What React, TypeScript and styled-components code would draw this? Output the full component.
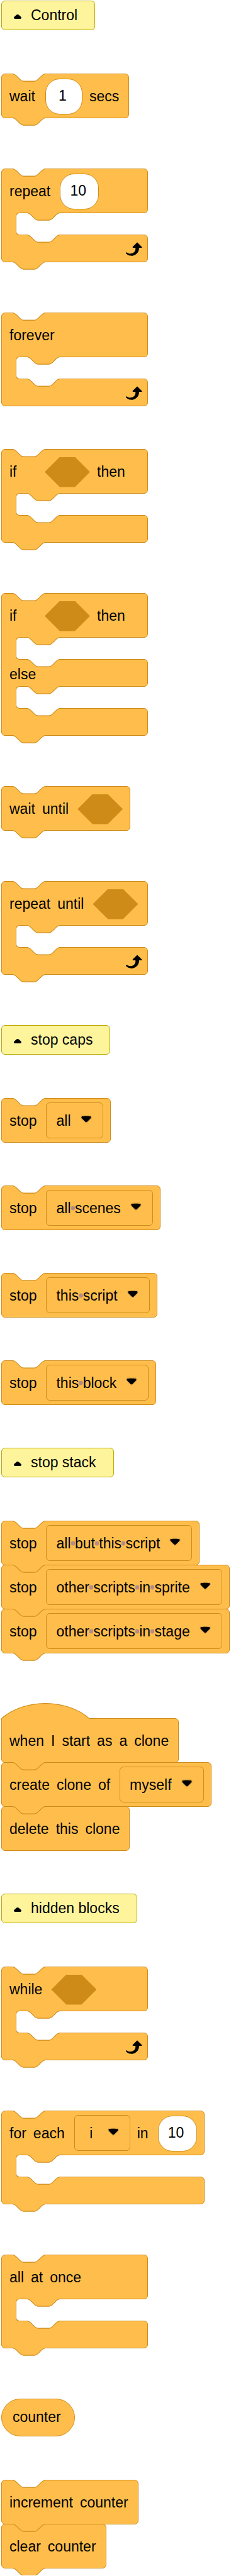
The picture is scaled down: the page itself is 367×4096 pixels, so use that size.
import React, { Fragment, useId, useState } from "react";
import styled, { createGlobalStyle } from "styled-components";

const color = {
  page: "#ffffff",
  block: "#ffbe4c",
  blockEdge: "#cf8b17",
  note: "#fef49c",
  noteEdge: "#bca903",
  spaceDot: "#b58c8a",
  text: "#000000",
};

const GlobalStyle = createGlobalStyle`
  body {
    margin: 0;
    background: ${color.page};
    color: ${color.text};
    font: 23px/26px "Liberation Sans", Arial, sans-serif;
  }
  *, *::before, *::after { box-sizing: border-box; }
`;

const Scripts = styled.main`
  display: flex;
  flex-direction: column;
  align-items: flex-start;
  gap: 69px;
  padding: 1px 0 0 2px;
`;

/* ---------- section notes ---------- */

const Note = styled.header`
  display: flex;
  align-items: center;
  gap: 15px;
  height: 47px;
  padding: 0 27px 2px 19px;
  background: ${color.note};
  border: 1px solid ${color.noteEdge};
  border-radius: 6px;
  white-space: nowrap;
`;

const NoteTitle = styled.h2`
  margin: 0;
  font: inherit;
`;

const NoteToggle = styled.button`
  display: flex;
  padding: 5px 0 0;
  border: 0;
  background: none;
  cursor: pointer;
`;

function Section({ title }: { title: string }) {
  return (
    <Note>
      <NoteToggle type="button" aria-label={`Collapse ${title}`}>
        <svg width="12" height="7" viewBox="0 0 12 7" aria-hidden="true">
          <path d="M6 0C6.8 0 7.4.3 8 .8L11.3 3.8C12.4 4.9 12.1 6.3 11 6.7C9.8 7.1 2.2 7.1 1 6.7C-.1 6.3-.4 4.9.7 3.8L4 .8C4.6.3 5.2 0 6 0Z" />
        </svg>
      </NoteToggle>
      <NoteTitle>{title}</NoteTitle>
    </Note>
  );
}

/* ---------- block shapes ---------- */

const Script = styled.section<{ $open?: boolean }>`
  display: flex;
  flex-direction: column;
  align-items: flex-start;
  padding-bottom: ${(p) => (p.$open ? 12 : 0)}px;
`;

const CBody = styled.div`
  display: flex;
  flex-direction: column;
  min-width: 233px;
`;

const Row = styled.div<{ $corners?: string }>`
  position: relative;
  display: flex;
  align-items: center;
  gap: 11px;
  height: 71px;
  margin-bottom: -1px;
  padding: 0 11px 0 12px;
  background: ${color.block};
  border: 1px solid ${color.blockEdge};
  border-radius: ${(p) => p.$corners ?? "6px"};
  white-space: nowrap;
`;

const MiddleRow = styled(Row)`
  height: 44px;
  padding-top: 4px;
`;

const Foot = styled(Row)`
  height: 44px;
  justify-content: flex-end;
  padding: 0 6px;
`;

const Spine = styled.div`
  position: relative;
  z-index: 1;
  display: flex;
  width: 36px;
  height: 36px;
  margin-bottom: -1px;
  padding-left: 22px;
  background: ${color.block};
  border-left: 1px solid ${color.blockEdge};
`;

const Mouth = styled.div`
  flex: 1;
  background: ${color.page};
  border: 1px solid ${color.blockEdge};
  border-right: 0;
  border-radius: 6px 0 0 6px;
`;

const Connector = styled.svg<{ $edge: "top" | "bottom"; $inner?: boolean }>`
  position: absolute;
  z-index: 2;
  top: ${(p) => (p.$edge === "top" ? "-1px" : "100%")};
  left: ${(p) => (p.$inner ? 40 : 17)}px;
`;

const NOTCH =
  "c2.9 0 4.35 1.45 5.8 2.9l5.8 5.8c1.45 1.45 2.9 2.9 5.8 2.9h17.4c2.9 0 4.35-1.45 5.8-2.9l5.8-5.8c1.45-1.45 2.9-2.9 5.8-2.9";

function Connection({ edge, inner }: { edge: "top" | "bottom"; inner?: boolean }) {
  return (
    <Connector $edge={edge} $inner={inner} width="53" height="13" viewBox="0 0 53 13" aria-hidden="true">
      <path d={`M0 .5${NOTCH}L50 0H2Z`} fill={edge === "top" ? color.page : color.block} />
      <path d={`M0 .5${NOTCH}`} fill="none" stroke={color.blockEdge} strokeWidth="1.1" />
    </Connector>
  );
}

const Notch = ({ inner }: { inner?: boolean }) => <Connection edge="top" inner={inner} />;
const Tab = ({ inner }: { inner?: boolean }) => <Connection edge="bottom" inner={inner} />;

const HatShape = styled.svg`
  position: relative;
  z-index: 1;
  display: block;
  margin: -1px 0;
`;

function Hat() {
  const dome = "M.5 24.5c36.2-31.9 103-31.9 139.2 0";
  return (
    <HatShape width="141" height="25" viewBox="0 0 141 25" aria-hidden="true">
      <path d={`${dome}V25H1Z`} fill={color.block} />
      <path d={dome} fill="none" stroke={color.blockEdge} strokeWidth="1.1" />
    </HatShape>
  );
}

function LoopArrow() {
  return (
    <svg width="35" height="35" viewBox="0 0 24 24" aria-hidden="true">
      <path d="M21.8 11h-2.6c0 1.5-.3 2.9-1 4.2-.8 1.6-2.1 2.8-3.7 3.6-1.5.8-3.3 1.1-4.9.8-1.6-.2-3.2-1-4.4-2.1-.4-.3-.4-.9-.1-1.2.3-.4.9-.4 1.2-.1 1 .7 2.2 1.1 3.4 1.1s2.3-.3 3.3-1c.9-.6 1.6-1.5 2-2.6.3-.9.4-1.8.2-2.8h-2.4c-.4 0-.7-.3-.7-.7 0-.2.1-.3.2-.4l4.4-4.4c.3-.3.7-.3.9 0L22 9.8c.3.3.4.6.3.9s-.3.3-.5.3z" />
    </svg>
  );
}

const CounterPill = styled.div`
  display: flex;
  align-items: center;
  height: 60px;
  padding: 0 21px 2px 17px;
  background: ${color.block};
  border: 1px solid ${color.blockEdge};
  border-radius: 30px;
`;

/* ---------- block contents ---------- */

/* A short first word still leaves the slot after it clear of the notch. */
const Word = styled.span<{ $lead?: boolean }>`
  min-width: ${(p) => (p.$lead ? 42 : 0)}px;
  &:last-of-type:not(:has(~ label, ~ input, ~ i)) {
    margin-right: 4px;
  }
`;

function Words({ text, lead }: { text: string; lead?: boolean }) {
  return (
    <>
      {text.split(" ").map((word, i) => (
        <Word key={i} $lead={lead}>
          {word}
        </Word>
      ))}
    </>
  );
}

const NumberInput = styled.input<{ $wide?: boolean }>`
  width: ${(p) => (p.$wide ? 62 : 59)}px;
  height: 57px;
  margin: 2px 0 0 4px;
  padding: 0 4px 2px 0;
  background: ${color.page};
  border: 1px solid ${color.blockEdge};
  border-radius: 23px;
  color: inherit;
  font: inherit;
  text-align: center;
`;

function NumberSlot({ value, label }: { value: string; label: string }) {
  return <NumberInput type="text" inputMode="numeric" aria-label={label} defaultValue={value} $wide={value.length > 1} />;
}

const BooleanSlot = styled.i`
  width: 72px;
  height: 48px;
  margin: 2px 0 0 3px;
  background: ${color.blockEdge};
  clip-path: polygon(24px 0, calc(100% - 24px) 0, 100% 50%, calc(100% - 24px) 100%, 24px 100%, 0 50%);
`;

const MenuBox = styled.label`
  position: relative;
  display: flex;
  align-items: center;
  gap: 15px;
  height: 57px;
  margin-left: 4px;
  padding: 0 17px 0 15px;
  border: 1px solid ${color.blockEdge};
  border-radius: 6px;
`;

const MenuValue = styled.span`
  min-width: 22px;
  text-align: center;
  white-space: pre;
`;

const SpaceDot = styled.span`
  background: radial-gradient(circle at 50% 13px, ${color.spaceDot} 3px, transparent 4px);
`;

const MenuArrow = styled.svg`
  margin-bottom: 4px;
`;

const MenuSelect = styled.select`
  position: absolute;
  inset: 0;
  width: 100%;
  height: 100%;
  opacity: 0;
  cursor: pointer;
  font: inherit;
`;

function Menu({ initial, options, label }: { initial: string; options: string[]; label: string }) {
  const [value, setValue] = useState(initial);
  const id = useId();
  return (
    <MenuBox htmlFor={id}>
      <MenuValue>
        {value.split(" ").map((word, i) => (
          <Fragment key={i}>
            {i > 0 && <SpaceDot> </SpaceDot>}
            {word}
          </Fragment>
        ))}
      </MenuValue>
      <MenuArrow width="18" height="13" viewBox="0 0 12.71 8.79" aria-hidden="true">
        <path
          opacity=".1"
          d="M12.71 2.44A2.41 2.41 0 0 1 12 4.16L8.08 8.08a2.45 2.45 0 0 1-3.45 0L.72 4.16A2.42 2.42 0 0 1 0 2.44 2.48 2.48 0 0 1 .71.71C1 .47 1.43 0 6.36 0S11.75.46 12 .71a2.44 2.44 0 0 1 .71 1.73Z"
        />
        <path d="M6.36 7.79a1.43 1.43 0 0 1-1-.42L1.42 3.45a1.44 1.44 0 0 1 0-2c.56-.56 9.31-.56 9.87 0a1.44 1.44 0 0 1 0 2L7.37 7.37a1.43 1.43 0 0 1-1.01.42Z" />
      </MenuArrow>
      <MenuSelect id={id} aria-label={label} value={value} onChange={(e) => setValue(e.target.value)}>
        {options.map((option) => (
          <option key={option}>{option}</option>
        ))}
      </MenuSelect>
    </MenuBox>
  );
}

const STOP_OPTIONS = [
  "all",
  "all scenes",
  "this script",
  "this block",
  "all but this script",
  "other scripts in sprite",
  "other scripts in stage",
];

/* ---------- whole blocks ---------- */

type BlockProps = { first?: boolean; tab?: boolean; corners?: string; children: React.ReactNode };

function Block({ first, tab, corners, children }: BlockProps) {
  return (
    <Row $corners={corners}>
      {first && <Notch />}
      {children}
      {tab && <Tab />}
    </Row>
  );
}

function StopBlock({ target, first, tab }: { target: string; first?: boolean; tab?: boolean }) {
  return (
    <Block first={first} tab={tab}>
      <Words text="stop" lead />
      <Menu label="stop" initial={target} options={STOP_OPTIONS} />
    </Block>
  );
}

type CBlockProps = { loop?: boolean; cap?: boolean; middle?: string; children: React.ReactNode };

function CBlock({ loop, cap, middle, children }: CBlockProps) {
  return (
    <Script $open={!cap}>
      <CBody>
        <Row $corners="6px 6px 6px 0">
          <Notch />
          {children}
          <Tab inner />
        </Row>
        <Spine>
          <Mouth />
        </Spine>
        {middle && (
          <>
            <MiddleRow $corners="0 6px 6px 0">
              <Notch inner />
              <Words text={middle} />
              <Tab inner />
            </MiddleRow>
            <Spine>
              <Mouth />
            </Spine>
          </>
        )}
        <Foot $corners="0 6px 6px 6px">
          <Notch inner />
          {loop && <LoopArrow />}
          {!cap && <Tab />}
        </Foot>
      </CBody>
    </Script>
  );
}

export default function App() {
  return (
    <>
      <GlobalStyle />
      <Scripts>
        <Section title="Control" />
        <Script $open>
          <Block first tab>
            <Words text="wait" lead />
            <NumberSlot value="1" label="seconds to wait" />
            <Words text="secs" />
          </Block>
        </Script>
        <CBlock loop>
          <Words text="repeat" />
          <NumberSlot value="10" label="times to repeat" />
        </CBlock>
        <CBlock loop cap>
          <Words text="forever" />
        </CBlock>
        <CBlock>
          <Words text="if" lead />
          <BooleanSlot />
          <Words text="then" />
        </CBlock>
        <CBlock middle="else">
          <Words text="if" lead />
          <BooleanSlot />
          <Words text="then" />
        </CBlock>
        <Script $open>
          <Block first tab>
            <Words text="wait until" />
            <BooleanSlot />
          </Block>
        </Script>
        <CBlock loop>
          <Words text="repeat until" />
          <BooleanSlot />
        </CBlock>

        <Section title="stop caps" />
        {["all", "all scenes", "this script", "this block"].map((target) => (
          <Script key={target}>
            <StopBlock first target={target} />
          </Script>
        ))}

        <Section title="stop stack" />
        <Script $open>
          <StopBlock first tab target="all but this script" />
          <StopBlock tab target="other scripts in sprite" />
          <StopBlock tab target="other scripts in stage" />
        </Script>
        <Script>
          <Hat />
          <Block tab corners="0 6px 6px 6px">
            <Words text="when I start as a clone" />
          </Block>
          <Block tab>
            <Words text="create clone of" />
            <Menu label="clone of" initial="myself" options={["myself"]} />
          </Block>
          <Block>
            <Words text="delete this clone" />
          </Block>
        </Script>

        <Section title="hidden blocks" />
        <CBlock loop>
          <Words text="while" />
          <BooleanSlot />
        </CBlock>
        <CBlock>
          <Words text="for each" />
          <Menu label="loop variable" initial="i" options={["i"]} />
          <Words text="in" />
          <NumberSlot value="10" label="last value" />
        </CBlock>
        <CBlock>
          <Words text="all at once" />
        </CBlock>
        <CounterPill>counter</CounterPill>
        <Script $open>
          <Block first tab>
            <Words text="increment counter" />
          </Block>
          <Block tab>
            <Words text="clear counter" />
          </Block>
        </Script>
      </Scripts>
    </>
  );
}
